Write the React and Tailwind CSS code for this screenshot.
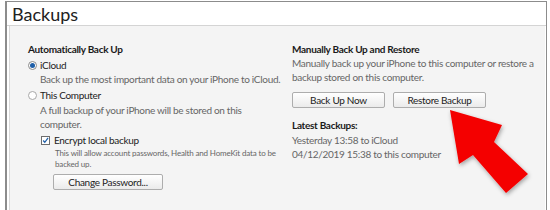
export default function App() {
  const btn =
    "h-[16px] border border-[#adadad] rounded-[2px] bg-gradient-to-b from-white to-[#ebebeb] flex items-center justify-center text-[#222]";
  return (
    <div className="relative w-[550px] h-[210px] overflow-hidden bg-white font-['Lato',sans-serif] text-[#333]">
      <div className="ml-[5px] mt-[1px] w-[542px] h-[215px] border-l-2 border-t border-r border-[#8c8c8c] bg-white flex flex-col">
        <div className="h-[24px] pl-[5px] text-[18px] leading-[24px] text-[#222] border-b border-[#d4d4d4]">
          Backups
        </div>
        <div className="flex-1 ml-[2px] mr-[1px] border-l border-[#d8d8d8] bg-[#f4f4f4] flex pl-[18px] pt-[16px] text-[10px] leading-[14px] tracking-[-0.3px] whitespace-nowrap">
          <div className="w-[264px] shrink-0">
            <div className="font-bold text-[#1a1a1a]">Automatically Back Up</div>
            <div className="mt-[2px] flex items-center">
              <span className="w-[9px] h-[9px] rounded-full border border-[#8a8a8a] bg-white flex items-center justify-center">
                <span className="w-[5px] h-[5px] rounded-full bg-[#1f5fa8]"></span>
              </span>
              <span className="ml-[3px] text-[#222]">iCloud</span>
            </div>
            <div className="pl-[12px] text-[#666]">
              Back up the most important data on your iPhone to iCloud.
            </div>
            <div className="mt-[2px] flex items-center">
              <span className="w-[9px] h-[9px] rounded-full border border-[#a8a8a8] bg-white"></span>
              <span className="ml-[3px] text-[#222]">This Computer</span>
            </div>
            <div className="mt-[1px] pl-[12px] text-[#666]">
              A full backup of your iPhone will be stored on this
              <br />
              computer.
            </div>
            <div className="mt-[2px] pl-[13px] flex items-center">
              <span className="w-[9px] h-[9px] border border-[#6d6d6d] bg-white flex items-center justify-center">
                <svg width="9" height="9" viewBox="0 0 9 9">
                  <path d="M1.5 4.5 L3.6 6.8 L7.8 1.2" fill="none" stroke="#1f5fa8" strokeWidth="1.6" />
                </svg>
              </span>
              <span className="ml-[4px] text-[#222]">Encrypt local backup</span>
            </div>
            <div className="mt-[1px] pl-[27px] text-[8px] leading-[11px] tracking-[-0.15px] text-[#666]">
              This will allow account passwords, Health and HomeKit data to be
              <br />
              backed up.
            </div>
            <div className={"mt-[4px] ml-[25px] w-[110px] " + btn}>Change Password...</div>
          </div>
          <div className="flex-1">
            <div className="font-bold text-[#1a1a1a]">Manually Back Up and Restore</div>
            <div className="text-[#666]">
              Manually back up your iPhone to this computer or restore a
              <br />
              backup stored on this computer.
            </div>
            <div className="mt-[8px] flex gap-[8px]">
              <div className={"w-[93px] " + btn}>Back Up Now</div>
              <div className={"w-[93px] " + btn}>Restore Backup</div>
            </div>
            <div className="mt-[10px] font-bold text-[#1a1a1a]">Latest Backups:</div>
            <div className="mt-[1px] text-[#666]">
              Yesterday 13:58 to iCloud
              <br />
              04/12/2019 15:38 to this computer
            </div>
          </div>
        </div>
      </div>
      <svg className="absolute left-0 top-0" width="550" height="210" viewBox="0 0 550 210">
        <defs>
          <filter id="sh" x="-20%" y="-20%" width="140%" height="140%">
            <feDropShadow dx="1" dy="2" stdDeviation="2" floodColor="#000" floodOpacity="0.35" />
          </filter>
        </defs>
        <polygon
          points="450,110 502,125 494,142 528,174 506,193 473,155 459,164"
          fill="#f40000"
          filter="url(#sh)"
        />
      </svg>
    </div>
  );
}
